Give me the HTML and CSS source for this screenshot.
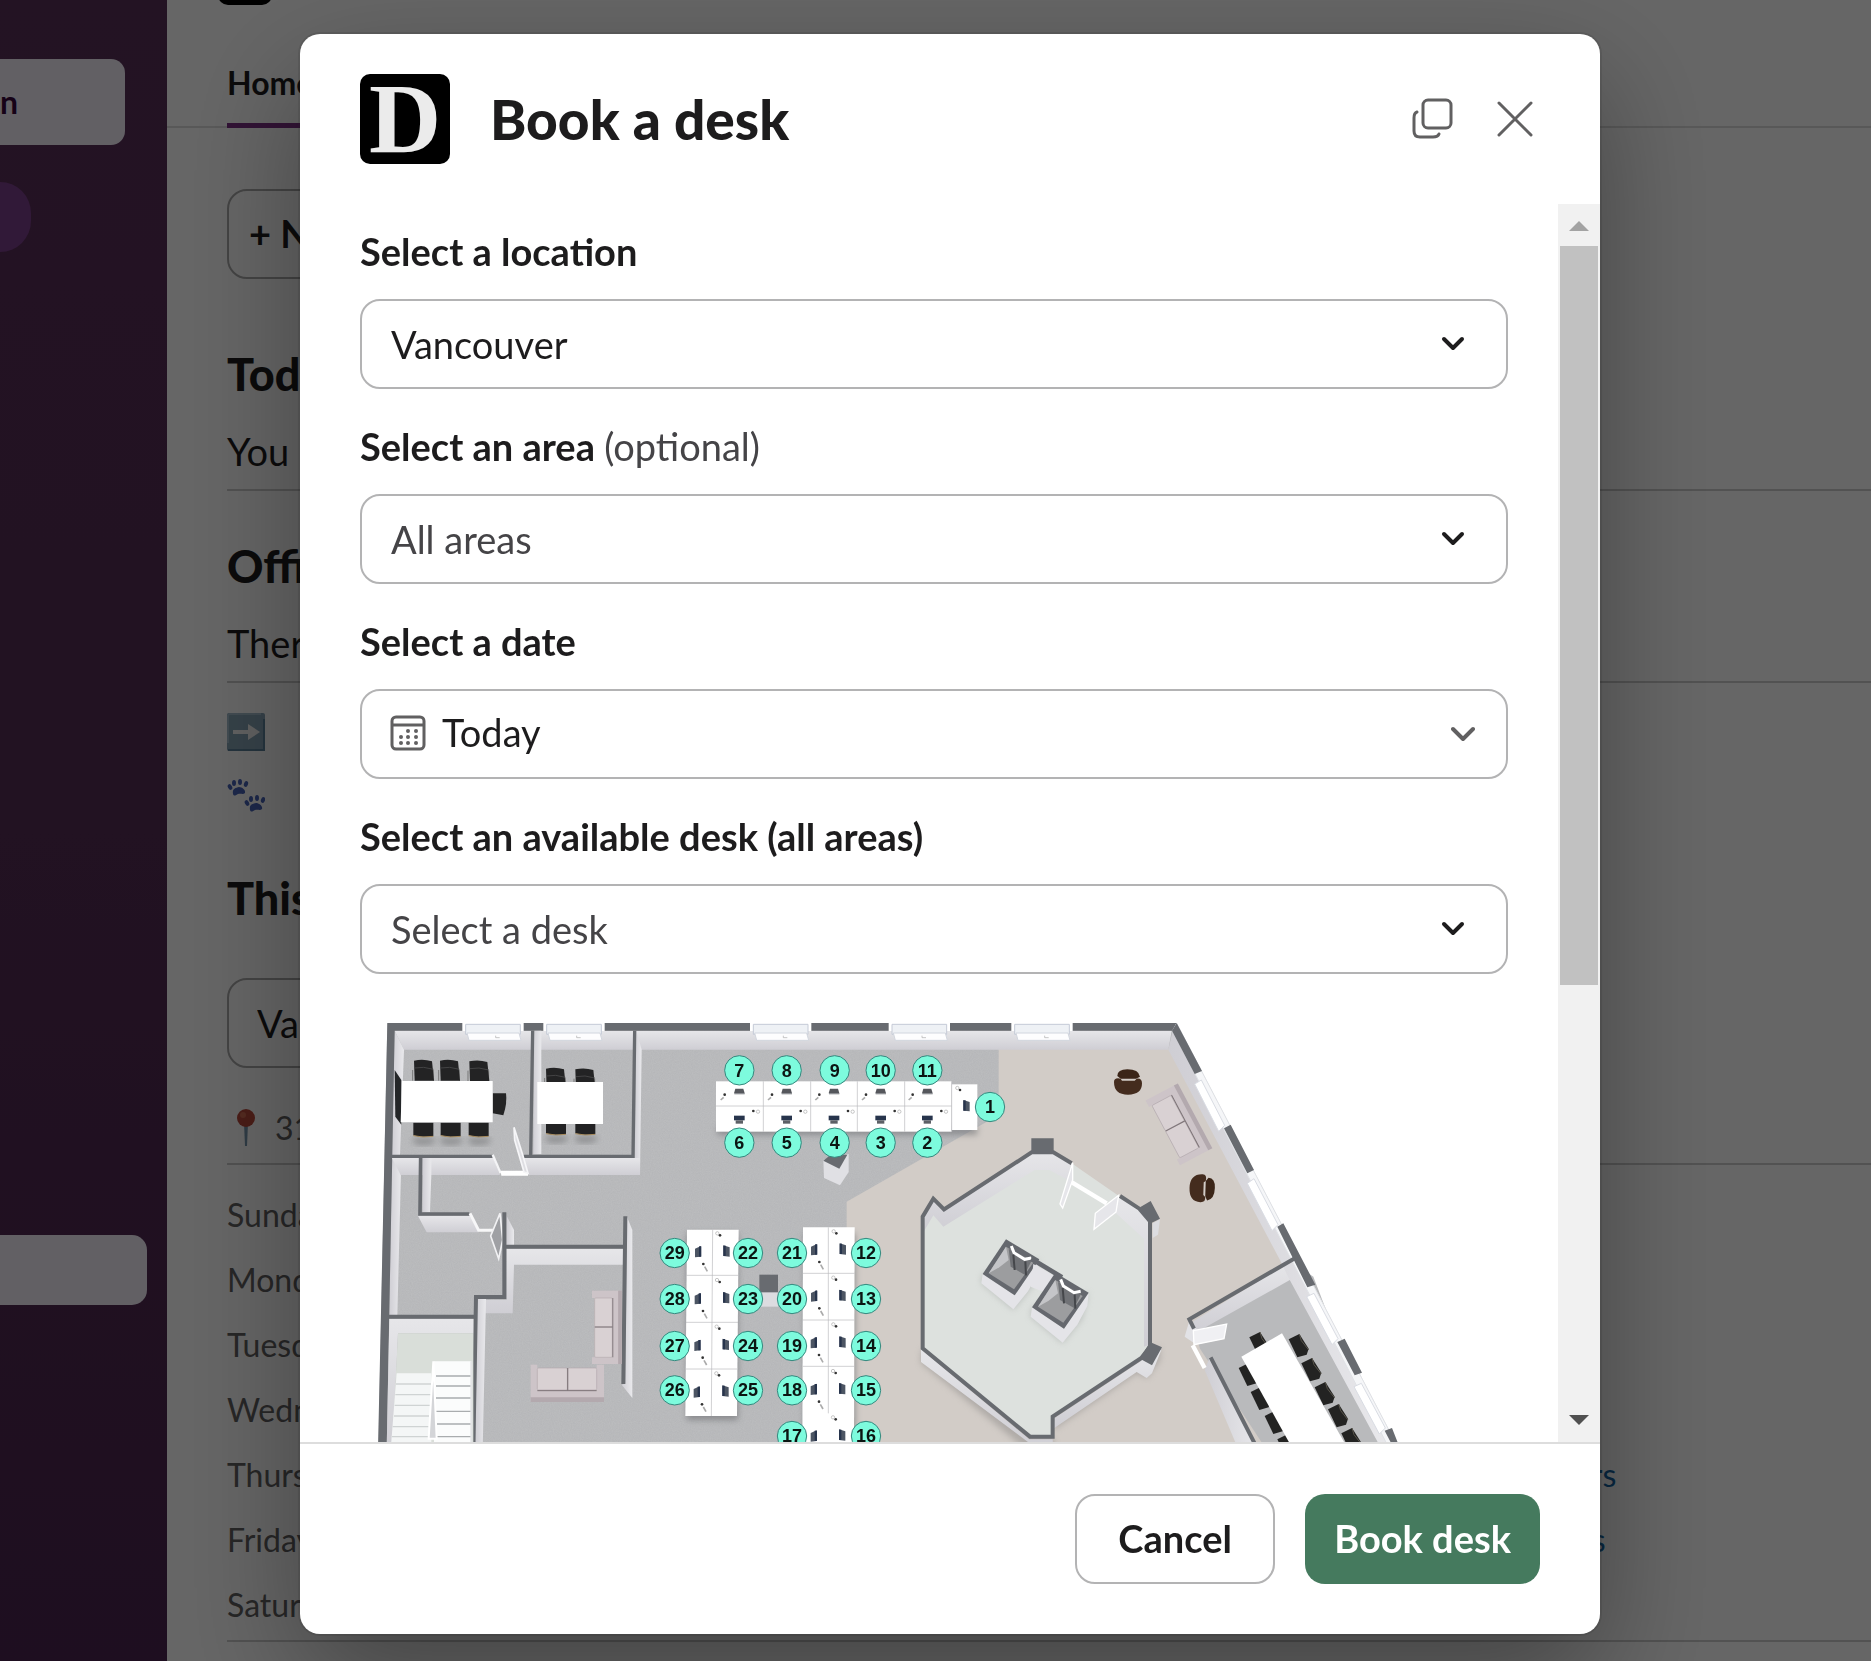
FILE: index.html
```html
<!DOCTYPE html>
<html lang="en">
<head>
  <meta charset="UTF-8" />
  <meta name="viewport" content="width=device-width, initial-scale=1.0"/>
  <title>Book a desk</title>
  <link rel="stylesheet" href="styles.css">
</head>
<body>
  <div class="app">
    <nav class="sidebar">
      <div class="side-search">n</div>
      <div class="side-pill"></div>
      <div class="side-active"></div>
    </nav>
    <main class="main">
      <div class="app-header"><div class="app-icon"></div></div>
      <div class="tabs"><a class="tab" href="#home">Home</a></div>
      <div class="content">
        <button class="new-btn" type="button">+ New</button>
        <h2 class="today">Today</h2>
        <p class="line">You</p>
        <hr>
        <h2 class="office">Office</h2>
        <p class="line">There</p>
        <hr>
        <div class="emojis">
          <svg class="emoji" viewBox="0 0 38 38">
            <rect width="38" height="38" rx="2" fill="#86a3b5"/>
            <path d="M1 30V3Q1 1 3 1H34" fill="none" stroke="#a3bccb" stroke-width="2"/>
            <path d="M1 37H37V6" fill="none" stroke="#5b8199" stroke-width="2"/>
            <path d="M6 17H21V11L33 19L21 27V21H6Z" fill="#f1f1f1"/>
          </svg>
          <svg class="emoji" viewBox="0 0 38 38" fill="#4763b8">
            <g id="paw">
              <ellipse cx="3" cy="8" rx="2" ry="3" transform="rotate(-30 3 8)"/>
              <ellipse cx="7" cy="4" rx="2" ry="3"/>
              <ellipse cx="13" cy="3" rx="2" ry="3"/>
              <ellipse cx="19" cy="5" rx="2" ry="3" transform="rotate(20 19 5)"/>
              <path d="M6 15C5 9 9 9 12 8C15 8 19 11 18 14C16 16 14 14 11 15C9 16 7 18 6 15Z"/>
            </g>
            <use href="#paw" x="17" y="16"/>
          </svg>
        </div>
        <h2 class="week">This week</h2>
        <select class="bg-select" aria-label="Office"><option>Vancouver</option></select>
        <div class="pin-row">
          <svg class="emoji" viewBox="0 0 38 38">
            <path d="M17 14H21L20 37H18Z" fill="#7596ad"/>
            <circle cx="19" cy="9" r="9" fill="#b8483a"/>
            <circle cx="16" cy="6" r="3" fill="#cf6a50"/>
          </svg>
          <span>31</span>
        </div>
        <hr>
        <div class="days">
          <div class="day"><span>Sunday</span></div>
          <div class="day"><span>Monday</span></div>
          <div class="day"><span>Tuesday</span></div>
          <div class="day"><span>Wednesday</span></div>
          <div class="day"><span>Thursday</span><a href="#thursday">4 others</a></div>
          <div class="day"><span>Friday</span><a href="#friday">3 desks</a></div>
          <div class="day"><span>Saturday</span></div>
        </div>
        <hr>
      </div>
    </main>
  </div>

  <div class="overlay">
    <section class="modal" role="dialog" aria-labelledby="modalTitle">
      <header class="modal-header">
        <div class="logo">D</div>
        <h1 id="modalTitle">Book a desk</h1>
        <button class="icon-btn" type="button" aria-label="Open in new window">
          <svg width="42" height="42" viewBox="0 0 42 42" fill="none" stroke="#616061" stroke-width="3" stroke-linecap="round">
            <rect x="11" y="2" width="28" height="28" rx="5"/>
            <path d="M5 14Q2 15 2 20V33Q2 39 8 39H21Q26 39 27 36"/>
          </svg>
        </button>
        <button class="icon-btn" type="button" aria-label="Close">
          <svg width="36" height="36" viewBox="0 0 36 36" fill="none" stroke="#616061" stroke-width="3" stroke-linecap="round">
            <path d="M2 2L34 34M34 2L2 34"/>
          </svg>
        </button>
      </header>

      <div class="modal-body">
        <form class="fields" id="bookForm">
          <div class="field">
            <label for="location">Select a location</label>
            <div class="select-wrap">
              <select id="location"><option>Vancouver</option></select>
              <svg class="chevron" viewBox="0 0 24 16"><path d="M3 3L12 12L21 3"/></svg>
            </div>
          </div>
          <div class="field">
            <label for="area">Select an area <span class="optional">(optional)</span></label>
            <div class="select-wrap">
              <select id="area" class="placeholder"><option>All areas</option></select>
              <svg class="chevron" viewBox="0 0 24 16"><path d="M3 3L12 12L21 3"/></svg>
            </div>
          </div>
          <div class="field">
            <label for="date">Select a date</label>
            <div class="select-wrap date">
              <svg class="calendar" viewBox="0 0 36 36">
                <rect x="2" y="2" width="32" height="32" rx="4" fill="none" stroke="#616061" stroke-width="3"/>
                <path d="M2 10H34" stroke="#616061" stroke-width="3"/>
                <g fill="#616061">
                  <circle cx="18" cy="16" r="2"/><circle cx="26" cy="16" r="2"/>
                  <circle cx="11" cy="22" r="2"/><circle cx="18" cy="22" r="2"/><circle cx="26" cy="22" r="2"/>
                  <circle cx="11" cy="28" r="2"/><circle cx="18" cy="28" r="2"/><circle cx="26" cy="28" r="2"/>
                </g>
              </svg>
              <select id="date"><option>Today</option></select>
              <svg class="chevron" viewBox="0 0 24 16"><path d="M2 3L12 13L22 3"/></svg>
            </div>
          </div>
          <div class="field">
            <label for="desk">Select an available desk (all areas)</label>
            <div class="select-wrap">
              <select id="desk" class="placeholder"><option>Select a desk</option></select>
              <svg class="chevron" viewBox="0 0 24 16"><path d="M3 3L12 12L21 3"/></svg>
            </div>
          </div>

          <svg class="plan" viewBox="0 0 3444 1350" role="img" aria-label="Floor plan">
            <defs>
              <linearGradient id="face" x1="0" y1="0" x2="0" y2="1">
                <stop offset="0" stop-color="#e6e6e9"/><stop offset="1" stop-color="#cfced4"/>
              </linearGradient>
              <linearGradient id="side" x1="0" y1="0" x2="1" y2="0">
                <stop offset="0" stop-color="#cfced4"/><stop offset="1" stop-color="#e9e9ec"/>
              </linearGradient>
              <filter id="soft" x="-20%" y="-20%" width="140%" height="140%"><feGaussianBlur stdDeviation="9"/></filter>
              <filter id="carpet" x="0" y="0" width="100%" height="100%">
                <feTurbulence type="fractalNoise" baseFrequency="0.3" numOctaves="2" seed="4"/>
                <feColorMatrix values="0 0 0 0 0.3  0 0 0 0 0.3  0 0 0 0 0.32  0.5 0 0 0 -0.12"/>
                <feComposite operator="in" in2="SourceGraphic"/>
              </filter>
              <g id="window">
                <rect width="184" height="24" fill="#fff"/>
                <path d="M10 4H174V34H10Z" fill="#eef1f5" stroke="#c5cad6" stroke-width="3"/>
                <path d="M14 30H170L176 52H20Z" fill="#fdfdfe" stroke="#d2d6de" stroke-width="3"/>
                <path d="M100 38V44H112" fill="none" stroke="#aaa" stroke-width="2"/>
              </g>
              <g id="chair">
                <path d="M-2 30V62M60 30V62" stroke="#777" stroke-width="3"/>
                <path d="M2 2Q30 -4 56 4L62 62H4Z" fill="#232324"/>
                <path d="M4 24Q30 18 60 28" fill="none" stroke="#434344" stroke-width="3"/>
              </g>
              <g id="chair-low">
                <path d="M0 46H66V60Q30 72 4 62Z" fill="#8b8c8e" filter="url(#soft)"/>
                <path d="M2 0H62V40Q30 46 2 38Z" fill="#222223"/>
                <path d="M2 39Q30 46 62 41" fill="none" stroke="#a98c5d" stroke-width="3"/>
              </g>
              <g id="chair-tilt">
                <path d="M0 12L32 -4L60 40L54 58L26 66Z" fill="#232322"/>
                <path d="M32 -4L38 16L60 44" fill="none" stroke="#5a564c" stroke-width="3"/>
              </g>
              <g id="pc-up">
                <path d="M-12 -8H12L16 6H-16Z" fill="#55575c"/><rect x="-15" y="5" width="31" height="4" fill="#8d8f94"/>
                <circle cx="-44" cy="10" r="4" fill="#333"/><path d="M-47 18L-56 26" stroke="#aaa" stroke-width="5"/>
              </g>
              <g id="pc-down">
                <path d="M-16 -10H16V4H-16Z" fill="#27344c"/><rect x="-11" y="4" width="22" height="10" fill="#5d6066"/>
                <circle cx="42" cy="-24" r="4" fill="#333"/><circle cx="56" cy="-22" r="5" fill="none" stroke="#aaa" stroke-width="2"/>
              </g>
              <g id="pc-left">
                <path d="M-9 -10L9 -18V14L-9 16Z" fill="#4c5563"/><rect x="3" y="-17" width="7" height="31" fill="#27344c"/>
                <circle cx="16" cy="36" r="4" fill="#333"/><path d="M20 44L28 58" stroke="#aaa" stroke-width="5"/>
              </g>
              <g id="pc-right">
                <path d="M-10 -18L9 -12V16L-10 14Z" fill="#4c5563"/><rect x="-10" y="-17" width="7" height="31" fill="#27344c"/>
                <circle cx="-20" cy="-48" r="4" fill="#333"/><circle cx="-28" cy="-54" r="5" fill="none" stroke="#aaa" stroke-width="2"/>
              </g>
              <g id="armchair">
                <path d="M10 20Q10 0 40 0Q74 0 78 22L66 28H20Z" fill="#3b2518"/>
                <path d="M0 38Q0 24 20 28L24 34H62L68 28Q84 26 84 42Q84 76 42 76Q0 76 0 38Z" fill="#442c1e"/>
              </g>
              <g id="sofa">
                <path d="M0 0H20V10H198V0H220V112H0Z" fill="#cdc4c8"/>
                <rect x="20" y="10" width="90" height="66" rx="4" fill="#d9d1d3" stroke="#b3a9ad" stroke-width="2"/>
                <rect x="112" y="10" width="86" height="66" rx="4" fill="#d9d1d3" stroke="#b3a9ad" stroke-width="2"/>
                <path d="M20 78H198M111 10V78" stroke="#7d7477" stroke-width="3"/>
                <path d="M0 98H220V112H0Z" fill="#b3a9ae"/>
              </g>
              <g id="lift">
                <path d="M0 104L-4 132L92 212L150 140L170 60Z" fill="#a9adab" filter="url(#soft)" opacity=".6"/>
                <path d="M0 104L-4 132L92 210L136 156L166 100L170 60L96 168Z" fill="#e4e4e8"/>
                <path d="M0 104L70 0L170 60L96 168Z" fill="#65686e"/>
                <path d="M18 102L70 22L152 70L94 150Z" fill="#9c9d9f"/>
                <path d="M18 102L70 22L78 62L50 84Z" fill="#c4c5c8"/>
                <path d="M78 28L84 82L126 106L140 78L148 62Z" fill="#707276"/>
                <path d="M86 20L94 40L126 60L146 56" fill="none" stroke="#fff" stroke-width="9"/>
                <path d="M92 46L96 92M128 66L130 108" stroke="#45474b" stroke-width="6"/>
              </g>
            </defs>

            <!-- floors -->
            <path d="M82 70H2450L3118 1350H55Z" fill="#bbbcbe"/>
            <path d="M82 70H2450L3118 1350H55Z" fill="#fff" filter="url(#carpet)" opacity=".5"/>
            <path d="M1916 145H2440L3060 1350H1460V605L1916 345Z" fill="#d2ccc7"/>

            <!-- outer wall, top and left -->
            <path d="M104 92H2435L2425 149H132Z" fill="url(#face)"/>
            <path d="M104 92L132 149L120 465H96Z" fill="url(#side)"/>
            <path d="M96 474H124L112 946H88Z" fill="url(#side)"/>
            <path d="M82 69H2450L2438 92H104L80 1350H54Z" fill="#686b70"/>
            <use href="#window" x="307" y="69"/><use href="#window" x="550" y="69"/>
            <use href="#window" x="1170" y="69"/><use href="#window" x="1586" y="69"/><use href="#window" x="1954" y="69"/>

            <!-- meeting rooms -->
            <path d="M523 92H544V462H520Z" fill="url(#side)"/>
            <path d="M829 92L845 149L840 525H824Z" fill="url(#side)"/>
            <path d="M96 474H400L420 525H122Z" fill="url(#face)"/>
            <path d="M490 474H840V525H506Z" fill="url(#face)"/>
            <path d="M96 469H398M490 469H824M518 92L512 469M824 92L819 473" fill="none" stroke="#686b70" stroke-width="10"/>
            <path d="M398 464L422 520" fill="none" stroke="#f4f4f6" stroke-width="7"/>
            <path d="M422 512H504V527H424Z" fill="#fff"/>
            <path d="M462 382L488 464L504 520L492 516L464 420Z" fill="#dedee2" stroke="#f6f6f8" stroke-width="5"/>
            <path d="M104 210L124 240V374L106 350Z" fill="#242628"/>
            <use href="#chair" x="160" y="180"/><use href="#chair" x="238" y="180"/><use href="#chair" x="326" y="182"/>
            <use href="#chair-low" x="158" y="368"/><use href="#chair-low" x="240" y="368"/><use href="#chair-low" x="324" y="368"/>
            <path d="M398 280H438Q442 310 430 346L398 340Z" fill="#242425"/>
            <path d="M126 243H398V367H122Z" fill="#fff"/>
            <use href="#chair" x="556" y="204"/><use href="#chair" x="644" y="206"/>
            <use href="#chair-low" x="556" y="362"/><use href="#chair-low" x="644" y="362"/>
            <rect x="532" y="246" width="197" height="126" fill="#fff"/>

            <!-- hallway -->
            <path d="M188 474H214V525L210 636H188Z" fill="url(#side)"/>
            <path d="M174 648H330L356 697H200Z" fill="url(#face)"/>
            <path d="M182 474L180 642H328" fill="none" stroke="#686b70" stroke-width="11"/>
            <path d="M330 640L356 691H404" fill="none" stroke="#f7f7f8" stroke-width="9"/>
            <path d="M420 640L392 708L416 776L428 720Z" fill="#9fa0a4" stroke="#f1f1f3" stroke-width="5"/>
            <path d="M440 648L462 690V736H440Z" fill="url(#side)"/>
            <path d="M440 746H790V794H462L458 940H356L370 900H440Z" fill="url(#face)"/>
            <path d="M352 896H378L368 1350H346Z" fill="url(#side)"/>
            <path d="M801 650L817 690V1194L785 1154L796 1150Z" fill="url(#side)"/>
            <path d="M433 637V891H348L340 1350M433 740H796M796 649L790 1152M86 950H346" fill="none" stroke="#686b70" stroke-width="12"/>

            <!-- stairs -->
            <path d="M88 957H340V1000H114L98 1350H80Z" fill="url(#face)"/>
            <path d="M114 1000H340V1350H96Z" fill="#d9ded9"/>
            <path d="M110 1120H214V1350H92Z" fill="#f4f6f6"/>
            <path d="M222 1084H334V1350H222Z" fill="#fbfcfc"/>
            <path d="M108 1152H214M106 1184H212M104 1216H210M102 1248H208M98 1280H206M96 1310H204" stroke="#cfd3d3" stroke-width="4"/>
            <path d="M228 1128H334M228 1158H334M228 1194H334M228 1234H334M228 1272H334M228 1310H334" stroke="#a9acae" stroke-width="4"/>
            <path d="M220 1084L206 1316H230L222 1130Z" fill="#d4d5d8" stroke="#fff" stroke-width="6"/>
            <path d="M334 1084V1350" stroke="#e3e4e6" stroke-width="6"/>

            <!-- lounge sofas -->
            <use href="#sofa" transform="translate(512 1094)"/>
            <use href="#sofa" transform="translate(696 1092) rotate(-90) scale(1 .8)"/>

            <!-- pillars -->
            <path d="M1198 876H1254V920H1198Z" fill="#dcdce0"/><path d="M1198 824H1254V877H1198Z" fill="#686b70"/>
            <path d="M1390 480L1466 462V516L1440 556L1392 534Z" fill="#e0e0e4"/><path d="M1390 482L1412 464H1462L1438 506Z" fill="#686b70"/>

            <!-- desks -->
            <g fill="#77787c" filter="url(#soft)" opacity=".7">
              <rect x="1072" y="380" width="780" height="24"/><rect x="980" y="700" width="154" height="560"/><rect x="1332" y="700" width="154" height="650"/>
            </g>
            <g fill="#fff">
              <rect x="1068" y="244" width="707" height="151"/><rect x="1776" y="253" width="76" height="137"/>
              <path d="M981 689H1136L1131 1248H976Z"/><path d="M1329 682H1484L1482 1350H1327Z"/>
            </g>
            <g fill="none" stroke="#b9b9bd" stroke-width="2">
              <path d="M1068 318H1775M1210 244V395M1352 244V395M1492 244V395M1634 244V395M1775 244V395"/>
              <path d="M1058 689L1054 1248M979 826H1135M978 967H1134M977 1107H1132"/>
              <path d="M1405 682V1240M1328 820H1484M1328 960H1483M1328 1099H1483"/>
            </g>
            <use href="#pc-up" x="1138" y="274"/><use href="#pc-up" x="1280" y="274"/><use href="#pc-up" x="1422" y="274"/><use href="#pc-up" x="1562" y="274"/><use href="#pc-up" x="1702" y="274"/>
            <use href="#pc-down" x="1138" y="357"/><use href="#pc-down" x="1280" y="357"/><use href="#pc-down" x="1422" y="357"/><use href="#pc-down" x="1562" y="357"/><use href="#pc-down" x="1702" y="357"/>
            <use href="#pc-right" x="1820" y="318"/>
            <use href="#pc-left" x="1014" y="756"/><use href="#pc-left" x="1013" y="897"/><use href="#pc-left" x="1012" y="1037"/><use href="#pc-left" x="1010" y="1177"/>
            <use href="#pc-right" x="1100" y="754"/><use href="#pc-right" x="1099" y="894"/><use href="#pc-right" x="1098" y="1034"/><use href="#pc-right" x="1097" y="1174"/>
            <use href="#pc-left" x="1362" y="750"/><use href="#pc-left" x="1362" y="889"/><use href="#pc-left" x="1361" y="1029"/><use href="#pc-left" x="1361" y="1169"/><use href="#pc-left" x="1361" y="1309"/>
            <use href="#pc-right" x="1449" y="748"/><use href="#pc-right" x="1448" y="887"/><use href="#pc-right" x="1448" y="1027"/><use href="#pc-right" x="1447" y="1167"/><use href="#pc-right" x="1447" y="1306"/>

            <!-- core -->
            <path d="M1686 1045L2010 1310H2080V1250L2340 1075L2400 1040V1080L2362 1134L2330 1120L2080 1290V1350H2000L1682 1088Z" fill="#8d8a88" filter="url(#soft)" opacity=".5"/>
            <path d="M1720 593L1752 628L2015 455H2080L2135 490L2280 590L2340 630L2370 665V1040L2340 1075L2078 1250V1310H2010L1688 1045V650Z" fill="#dde1de"/>
            <path d="M1752 628L2015 455H2080L2135 490L2124 540L2068 510H2024L1750 680L1720 646L1692 694V650L1720 600Z" fill="url(#face)"/>
            <path d="M2280 590L2340 630L2366 665V1035L2352 1040V716L2268 640L2200 690L2204 650Z" fill="url(#face)"/>
            <path d="M1683 1048L2008 1318H2078L2080 1350H2036L1683 1086Z" fill="url(#face)"/>
            <path d="M2084 1254L2344 1082L2372 1048L2404 1050L2376 1120L2360 1134L2330 1116L2080 1286Z" fill="url(#face)"/>
            <path d="M2378 670L2400 658L2394 704L2378 714Z" fill="#dcdce0"/>
            <path d="M2135 490L2080 457H2015L1752 628L1720 596L1688 650V1045L2010 1310H2078V1250L2344 1074L2370 1040V664L2338 626L2280 588" fill="none" stroke="#686b70" stroke-width="12"/>
            <path d="M2014 415H2081V458H2014ZM2340 622L2372 603L2400 656L2368 672ZM2370 1026L2406 1042L2376 1096L2340 1076Z" fill="#686b70"/>
            <path d="M2132 545L2240 610" stroke="#fff" stroke-width="13"/>
            <path d="M2138 488V540L2108 624L2100 612Z" fill="#e6e6ea" stroke="#fff" stroke-width="4"/>
            <path d="M2276 586L2206 640L2202 688L2268 636Z" fill="#e6e6ea" stroke="#fff" stroke-width="4"/>
            <use href="#lift" x="1868" y="718"/>
            <path d="M2020 792L2084 828L2056 878L2012 860Z" fill="#e4e4e8"/>
            <path d="M2014 776L2106 832" stroke="#65686e" stroke-width="14"/>
            <use href="#lift" x="2016" y="818"/>

            <!-- east seating -->
            <use href="#armchair" x="2262" y="208"/>
            <use href="#armchair" transform="translate(2566 524) rotate(92)"/>
            <use href="#sofa" transform="translate(2460 496) rotate(-118) scale(1 .98)"/>

            <!-- boardroom -->
            <path d="M2804 790L2500 975L2520 1046L2720 1350H3060L2860 830Z" fill="#b9babc"/>
            <path d="M2790 785L2804 832L2504 1000L2500 964Z" fill="url(#face)"/>
            <path d="M2488 962L2512 990V1036L2474 1010Z" fill="#e2e2e6"/>
            <path d="M2550 1070L2700 1350H2636L2534 1110Z" fill="url(#side)"/>
            <path d="M2500 992L2600 972L2592 1016L2502 1034Z" fill="#f0f0f3" stroke="#fff" stroke-width="4"/>
            <path d="M2498 1036L2534 1104" stroke="#fff" stroke-width="13"/>
            <use href="#chair-tilt" x="2786" y="1006"/><use href="#chair-tilt" x="2824" y="1078"/><use href="#chair-tilt" x="2864" y="1150"/><use href="#chair-tilt" x="2904" y="1216"/><use href="#chair-tilt" x="2944" y="1288"/>
            <use href="#chair-tilt" x="2668" y="1000"/><use href="#chair-tilt" x="2636" y="1092"/><use href="#chair-tilt" x="2672" y="1164"/><use href="#chair-tilt" x="2714" y="1236"/><use href="#chair-tilt" x="2752" y="1306"/>
            <path d="M2644 1070L2766 1000L2966 1350H2800Z" fill="#fff"/>

            <!-- east wall with windows -->
            <path d="M2438 92L2518 224L2810 790L3110 1350H3066L2784 830L2760 780L2425 149Z" fill="url(#side)"/>
            <path d="M2450 70L3118 1350H3090L2438 92Z" fill="#f5f6f8" stroke="#e0e2e6" stroke-width="3"/>
            <path d="M2450 69L2526 213L2504 222L2436 92ZM2592 385L2612 374L2682 510L2662 520ZM2752 680L2770 670L2866 854L2842 862ZM2932 1026L2954 1016L3006 1118L2984 1126ZM3074 1292L3096 1284L3122 1350H3104Z" fill="#686b70"/>
            <path d="M2504 252L2524 240L2594 376L2576 394ZM2662 550L2682 536L2754 674L2736 692ZM2840 890L2862 880L2934 1016L2916 1034ZM2982 1160L3004 1150L3076 1284L3058 1302Z" fill="#fff" stroke="#d9dce3" stroke-width="3"/>
            <path d="M2502 986L2488 958L2802 776M2552 1072L2694 1350" fill="none" stroke="#686b70" stroke-width="12"/>

            <!-- desk numbers -->
            <g class="dots">
              <circle cx="1138" cy="211" r="44"/><circle cx="1280" cy="211" r="44"/><circle cx="1424" cy="211" r="44"/><circle cx="1562" cy="211" r="44"/><circle cx="1702" cy="211" r="44"/>
              <circle cx="1138" cy="428" r="44"/><circle cx="1280" cy="428" r="44"/><circle cx="1424" cy="428" r="44"/><circle cx="1562" cy="428" r="44"/><circle cx="1702" cy="428" r="44"/>
              <circle cx="1890" cy="321" r="44"/>
              <circle cx="944" cy="759" r="44"/><circle cx="944" cy="897" r="44"/><circle cx="944" cy="1038" r="44"/><circle cx="944" cy="1171" r="44"/>
              <circle cx="1164" cy="759" r="44"/><circle cx="1164" cy="897" r="44"/><circle cx="1164" cy="1038" r="44"/><circle cx="1164" cy="1171" r="44"/>
              <circle cx="1296" cy="759" r="44"/><circle cx="1296" cy="897" r="44"/><circle cx="1296" cy="1038" r="44"/><circle cx="1296" cy="1171" r="44"/><circle cx="1296" cy="1308" r="44"/>
              <circle cx="1518" cy="759" r="44"/><circle cx="1518" cy="897" r="44"/><circle cx="1518" cy="1038" r="44"/><circle cx="1518" cy="1171" r="44"/><circle cx="1518" cy="1308" r="44"/>
            </g>
            <g class="nums">
              <text x="1138" y="230">7</text><text x="1280" y="230">8</text><text x="1424" y="230">9</text><text x="1562" y="230">10</text><text x="1702" y="230">11</text>
              <text x="1138" y="447">6</text><text x="1280" y="447">5</text><text x="1424" y="447">4</text><text x="1562" y="447">3</text><text x="1702" y="447">2</text>
              <text x="1890" y="340">1</text>
              <text x="944" y="777">29</text><text x="944" y="915">28</text><text x="944" y="1056">27</text><text x="944" y="1189">26</text>
              <text x="1164" y="777">22</text><text x="1164" y="915">23</text><text x="1164" y="1056">24</text><text x="1164" y="1189">25</text>
              <text x="1296" y="777">21</text><text x="1296" y="915">20</text><text x="1296" y="1056">19</text><text x="1296" y="1189">18</text><text x="1296" y="1327">17</text>
              <text x="1518" y="777">12</text><text x="1518" y="915">13</text><text x="1518" y="1056">14</text><text x="1518" y="1189">15</text><text x="1518" y="1327">16</text>
            </g>
          </svg>
        </form>
        <div class="scrollbar">
          <svg class="arrow" viewBox="0 0 42 42"><path d="M11 27H31L21 17Z" fill="#a3a3a3"/></svg>
          <div class="track"><div class="thumb"></div></div>
          <svg class="arrow" viewBox="0 0 42 42"><path d="M11 15H31L21 25Z" fill="#505050"/></svg>
        </div>
      </div>

      <footer class="modal-footer">
        <button class="btn" type="button">Cancel</button>
        <button class="btn primary" type="submit" form="bookForm">Book desk</button>
      </footer>
    </section>
  </div>
</body>
</html>
```

FILE: styles.css
```css
* {
  box-sizing: border-box;
}
body {
  margin: 0;
  font-family: Lato, sans-serif;
  font-size: 38px;
  line-height: 56px;
  color: #1d1c1d;
  background-color: #fff;
}
h1, h2, p {
  margin: 0;
}
a {
  color: #1264a3;
  text-decoration: none;
}
select, button {
  font: inherit;
  color: inherit;
  background: none;
}

/* page behind the modal */
.app {
  display: flex;
  height: 100vh;
  overflow: hidden;
}
.sidebar {
  flex: 0 0 167px;
  padding-top: 59px;
  background: linear-gradient(#583058, #552d55 50%, #4c2550);
}
.side-search {
  width: 125px;
  height: 86px;
  line-height: 86px;
  border-radius: 0 14px 14px 0;
  background-color: #f5effa;
  color: #39063a;
  font-size: 32px;
  font-weight: bold;
}
.side-pill {
  width: 31px;
  height: 70px;
  margin-top: 37px;
  border-radius: 0 35px 35px 0;
  background-color: #7c3f8c;
}
.side-active {
  width: 147px;
  height: 70px;
  margin-top: 983px;
  border-radius: 0 15px 15px 0;
  background-color: #f5effa;
}
.main {
  flex: 1;
  min-width: 0;
}
.app-header {
  display: flex;
  align-items: flex-end;
  height: 5px;
  padding-left: 51px;
}
.app-icon {
  flex: none;
  width: 54px;
  height: 54px;
  border-radius: 10px;
  background-color: #000;
}
.tabs {
  display: flex;
  padding-left: 60px;
  border-bottom: 2px solid #ddd;
}
.tab {
  padding: 58px 0 20px;
  margin-bottom: -2px;
  border-bottom: 5px solid #7c3085;
  color: #1d1c1d;
  font-size: 32px;
  line-height: 40px;
  font-weight: bold;
}
.content {
  padding: 61px 0 0 60px;
}
.new-btn {
  display: block;
  height: 90px;
  padding: 0 20px 2px;
  border: 2px solid #aaa;
  border-radius: 20px;
  font-weight: bold;
}
h2 {
  font-size: 45px;
  font-weight: 900;
}
.today {
  margin-top: 67px;
}
.office {
  margin-top: 47px;
}
.line {
  margin: 21px 0 10px;
}
hr {
  height: 2px;
  margin: 0;
  border: none;
  background-color: #ccc;
}
.emojis {
  display: flex;
  flex-direction: column;
  gap: 28px;
  margin-top: 30px;
}
.emoji {
  width: 38px;
  height: 38px;
}
.week {
  margin-top: 53px;
}
.bg-select {
  display: block;
  appearance: none;
  width: 500px;
  height: 90px;
  margin-top: 52px;
  padding: 0 28px;
  border: 2px solid #aaa;
  border-radius: 20px;
}
.pin-row {
  display: flex;
  align-items: center;
  gap: 10px;
  height: 60px;
  margin-top: 30px;
  margin-bottom: 5px;
  font-size: 32px;
  color: #616061;
}
.days {
  padding: 17px 0 3px;
  font-size: 32px;
  line-height: 65px;
  color: #616061;
}
.day {
  display: grid;
  grid-template-columns: 1273px 1fr;
}

/* modal */
.overlay {
  position: fixed;
  inset: 0;
  display: flex;
  padding: 34px 271px 27px 300px;
  background-color: rgba(0, 0, 0, 0.6);
}
.modal {
  flex: 1;
  min-width: 0;
  display: flex;
  flex-direction: column;
  overflow: hidden;
  border-radius: 20px;
  background-color: #fff;
  box-shadow: 0 0 0 2px rgba(29, 28, 29, 0.13), 0 45px 120px rgba(0, 0, 0, 0.35);
}
.modal-header {
  display: flex;
  align-items: center;
  gap: 12px;
  padding: 40px 50px 40px 60px;
}
.logo {
  width: 90px;
  height: 90px;
  border-radius: 10px;
  background-color: #000;
  color: #ebebeb;
  font-family: "Liberation Serif", serif;
  font-size: 100px;
  font-weight: bold;
  line-height: 90px;
  text-align: center;
}
h1 {
  flex: 1;
  padding-left: 28px;
  font-size: 55px;
  font-weight: 900;
}
.icon-btn {
  display: flex;
  align-items: center;
  justify-content: center;
  width: 70px;
  height: 70px;
  padding: 0;
  border: none;
}
.modal-body {
  flex: 1;
  min-height: 0;
  display: flex;
  overflow: hidden;
}
.fields {
  flex: 1;
  min-width: 0;
  padding: 20px 50px 0 60px;
}
.field {
  margin-bottom: 30px;
}
.field label {
  display: block;
  margin-bottom: 20px;
  line-height: 55px;
  font-weight: bold;
}
.optional {
  font-weight: normal;
  color: #454447;
}
.select-wrap {
  position: relative;
}
.select-wrap select {
  display: block;
  appearance: none;
  width: 100%;
  height: 90px;
  padding: 0 90px 0 29px;
  border: 2px solid #b3b3b4;
  border-radius: 20px;
}
.select-wrap .placeholder {
  color: #454447;
}
.date select {
  padding: 0 90px 4px 80px;
}
.chevron {
  position: absolute;
  top: 37px;
  right: 43px;
  width: 24px;
  height: 16px;
  fill: none;
  stroke: #1d1c1d;
  stroke-width: 4;
  stroke-linecap: round;
  stroke-linejoin: round;
}
.date .chevron {
  right: 33px;
  stroke: #616061;
}
.calendar {
  position: absolute;
  top: 26px;
  left: 30px;
  width: 36px;
  height: 36px;
}
.plan {
  display: block;
  width: 100%;
  margin-top: -4px;
}
.dots {
  fill: #7dfbdd;
  stroke: #35877d;
  stroke-width: 3;
}
.nums {
  font-family: "Liberation Sans", Arial, sans-serif;
  font-size: 54px;
  font-weight: bold;
  text-anchor: middle;
  fill: #0b1512;
}
.scrollbar {
  flex: 0 0 42px;
  display: flex;
  flex-direction: column;
  background-color: #f1f1f1;
}
.arrow {
  flex: none;
  width: 42px;
  height: 42px;
}
.track {
  flex: 1;
  padding: 0 2px;
}
.thumb {
  height: 64%;
  background-color: #c1c1c1;
}
.modal-footer {
  display: flex;
  justify-content: flex-end;
  gap: 30px;
  padding: 50px 60px;
  border-top: 2px solid #ddd;
}
.btn {
  min-width: 200px;
  height: 90px;
  padding: 0 29px 2px;
  border: 2px solid #b3b3b4;
  border-radius: 20px;
  font-weight: bold;
}
.primary {
  border: none;
  background-color: #457a5e;
  color: #fff;
}
```
